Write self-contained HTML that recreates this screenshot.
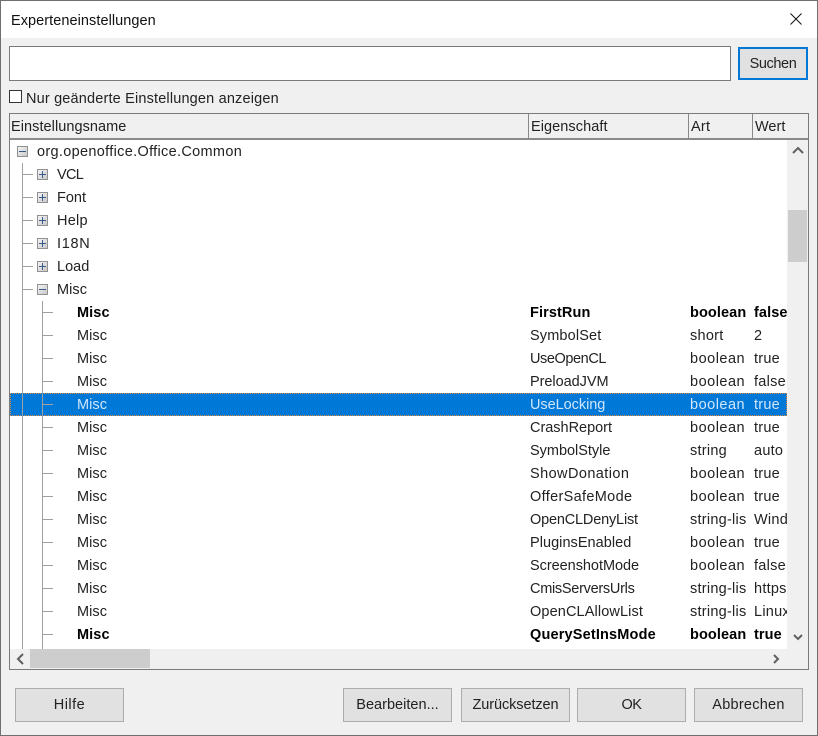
<!DOCTYPE html>
<html><head><meta charset="utf-8"><style>
html,body{margin:0;padding:0}
body{width:818px;height:736px;overflow:hidden;position:relative;background:#f0f0f0;font:14.5px/23px "Liberation Sans",sans-serif;color:#222}
div{position:absolute;box-sizing:border-box}
.t{white-space:nowrap;letter-spacing:.25px;margin-top:1px}
.m{letter-spacing:.05px}
.bo{letter-spacing:.5px}
.b{font-weight:bold;color:#000;letter-spacing:.1px}
.w{color:#cfe6fb}
.btn{height:34px;top:688px;width:109px;background:#e1e1e1;border:1px solid #adadad;text-align:center;line-height:33px;letter-spacing:.25px}
.v{background:#a0a0a0;width:1px}
.h{background:#a0a0a0;height:1px}
.box{width:11px;height:11px;background:linear-gradient(135deg,#f4f4f4,#c8c8c8);border:1px solid #919191}
.box:before{content:"";position:absolute;left:1px;top:4px;width:7px;height:1px;background:#3a5a8c}
.p:after{content:"";position:absolute;left:4px;top:1px;width:1px;height:7px;background:#3a5a8c}
.c{overflow:hidden;height:23px}
</style></head><body>
<div style="left:0;top:0;width:818px;height:38px;background:#fff"></div>
<div style="left:0;top:0;width:818px;height:736px;border:1px solid #6f6f6f;z-index:9;pointer-events:none"></div>
<div class="t" style="left:11px;top:9px;color:#111;letter-spacing:.06px">Experteneinstellungen</div>
<svg style="position:absolute;left:790px;top:13px" width="12" height="12"><path d="M.5.5l11 11M11.5.5l-11 11" stroke="#111" fill="none"/></svg>

<div style="left:9px;top:46px;width:722px;height:35px;background:#fff;border:1px solid #7a7a7a"></div>
<div style="left:738px;top:47px;width:70px;height:33px;background:#e1e1e1;border:2px solid #0078d7;text-align:center;line-height:30px;letter-spacing:-.4px">Suchen</div>
<div style="left:9px;top:90px;width:13px;height:13px;background:#fff;border:1px solid #333"></div>
<div class="t" style="left:26px;top:87px;letter-spacing:.17px">Nur geänderte Einstellungen anzeigen</div>

<div style="left:9px;top:113px;width:800px;height:557px;border:1px solid #7a7a7a;background:#f0f0f0"></div>
<div style="left:10px;top:138px;width:798px;height:2px;background:#8a8a8a"></div>
<div class="v" style="left:528px;top:114px;height:24px;background:#888"></div>
<div class="v" style="left:688px;top:114px;height:24px;background:#888"></div>
<div class="v" style="left:752px;top:114px;height:24px;background:#888"></div>
<div class="t" style="left:11px;top:115px;letter-spacing:.06px">Einstellungsname</div>
<div class="t" style="left:531px;top:115px;letter-spacing:.07px">Eigenschaft</div>
<div class="t" style="left:691px;top:115px">Art</div>
<div class="t" style="left:755px;top:115px;letter-spacing:0">Wert</div>

<div style="left:10px;top:140px;width:777px;height:509px;background:#fff"></div>
<div style="left:10px;top:393px;width:777px;height:23px;background:#0078d7;outline:1px dotted #e08a3c;outline-offset:-1px"></div>

<div class="v" style="left:22px;top:163px;height:486px"></div>
<div class="v" style="left:42px;top:301px;height:348px"></div>
<div class="h" style="left:22px;top:174px;width:11px"></div>
<div class="h" style="left:22px;top:197px;width:11px"></div>
<div class="h" style="left:22px;top:220px;width:11px"></div>
<div class="h" style="left:22px;top:243px;width:11px"></div>
<div class="h" style="left:22px;top:266px;width:11px"></div>
<div class="h" style="left:22px;top:289px;width:11px"></div>
<div class="h" style="left:43px;top:312px;width:10px"></div>
<div class="h" style="left:43px;top:335px;width:10px"></div>
<div class="h" style="left:43px;top:358px;width:10px"></div>
<div class="h" style="left:43px;top:381px;width:10px"></div>
<div class="h" style="left:43px;top:404px;width:10px"></div>
<div class="h" style="left:43px;top:427px;width:10px"></div>
<div class="h" style="left:43px;top:450px;width:10px"></div>
<div class="h" style="left:43px;top:473px;width:10px"></div>
<div class="h" style="left:43px;top:496px;width:10px"></div>
<div class="h" style="left:43px;top:519px;width:10px"></div>
<div class="h" style="left:43px;top:542px;width:10px"></div>
<div class="h" style="left:43px;top:565px;width:10px"></div>
<div class="h" style="left:43px;top:588px;width:10px"></div>
<div class="h" style="left:43px;top:611px;width:10px"></div>
<div class="h" style="left:43px;top:634px;width:10px"></div>

<div class="box" style="left:17px;top:146px"></div>
<div class="box p" style="left:37px;top:169px"></div>
<div class="box p" style="left:37px;top:192px"></div>
<div class="box p" style="left:37px;top:215px"></div>
<div class="box p" style="left:37px;top:238px"></div>
<div class="box p" style="left:37px;top:261px"></div>
<div class="box" style="left:37px;top:284px"></div>

<div class="t" style="left:37px;top:140px;letter-spacing:.32px">org.openoffice.Office.Common</div>
<div class="t" style="left:57px;top:163px;letter-spacing:-.7px">VCL</div>
<div class="t" style="left:57px;top:186px;letter-spacing:0">Font</div>
<div class="t" style="left:57px;top:209px">Help</div>
<div class="t" style="left:57px;top:232px;letter-spacing:.7px">I18N</div>
<div class="t" style="left:57px;top:255px;letter-spacing:0">Load</div>
<div class="t m" style="left:57px;top:278px">Misc</div>

<div class="t b" style="left:77px;top:301px">Misc</div><div class="t b" style="left:530px;top:301px">FirstRun</div><div class="t b" style="left:690px;top:301px">boolean</div><div class="t b c" style="left:754px;top:301px;width:33px">false</div>
<div class="t m" style="left:77px;top:324px">Misc</div><div class="t" style="left:530px;top:324px;letter-spacing:.14px">SymbolSet</div><div class="t" style="left:690px;top:324px">short</div><div class="t c" style="left:754px;top:324px;width:33px">2</div>
<div class="t m" style="left:77px;top:347px">Misc</div><div class="t" style="left:530px;top:347px;letter-spacing:-.42px">UseOpenCL</div><div class="t bo" style="left:690px;top:347px">boolean</div><div class="t c" style="left:754px;top:347px;width:33px">true</div>
<div class="t m" style="left:77px;top:370px">Misc</div><div class="t" style="left:530px;top:370px;letter-spacing:-.05px">PreloadJVM</div><div class="t bo" style="left:690px;top:370px">boolean</div><div class="t c" style="left:754px;top:370px;width:33px">false</div>
<div class="t w m" style="left:77px;top:393px">Misc</div><div class="t w" style="left:530px;top:393px;letter-spacing:-.05px">UseLocking</div><div class="t w bo" style="left:690px;top:393px">boolean</div><div class="t w c" style="left:754px;top:393px;width:33px">true</div>
<div class="t m" style="left:77px;top:416px">Misc</div><div class="t" style="left:530px;top:416px;letter-spacing:-.02px">CrashReport</div><div class="t bo" style="left:690px;top:416px">boolean</div><div class="t c" style="left:754px;top:416px;width:33px">true</div>
<div class="t m" style="left:77px;top:439px">Misc</div><div class="t" style="left:530px;top:439px;letter-spacing:-.02px">SymbolStyle</div><div class="t" style="left:690px;top:439px">string</div><div class="t c" style="left:754px;top:439px;width:33px">auto</div>
<div class="t m" style="left:77px;top:462px">Misc</div><div class="t" style="left:530px;top:462px;letter-spacing:.42px">ShowDonation</div><div class="t bo" style="left:690px;top:462px">boolean</div><div class="t c" style="left:754px;top:462px;width:33px">true</div>
<div class="t m" style="left:77px;top:485px">Misc</div><div class="t" style="left:530px;top:485px;letter-spacing:.33px">OfferSafeMode</div><div class="t bo" style="left:690px;top:485px">boolean</div><div class="t c" style="left:754px;top:485px;width:33px">true</div>
<div class="t m" style="left:77px;top:508px">Misc</div><div class="t" style="left:530px;top:508px;letter-spacing:-.18px">OpenCLDenyList</div><div class="t c" style="left:690px;top:508px;width:56px">string-list</div><div class="t c" style="left:754px;top:508px;width:33px">Windows</div>
<div class="t m" style="left:77px;top:531px">Misc</div><div class="t" style="left:530px;top:531px;letter-spacing:.04px">PluginsEnabled</div><div class="t bo" style="left:690px;top:531px">boolean</div><div class="t c" style="left:754px;top:531px;width:33px">true</div>
<div class="t m" style="left:77px;top:554px">Misc</div><div class="t" style="left:530px;top:554px;letter-spacing:-.04px">ScreenshotMode</div><div class="t bo" style="left:690px;top:554px">boolean</div><div class="t c" style="left:754px;top:554px;width:33px">false</div>
<div class="t m" style="left:77px;top:577px">Misc</div><div class="t" style="left:530px;top:577px;letter-spacing:-.28px">CmisServersUrls</div><div class="t c" style="left:690px;top:577px;width:56px">string-list</div><div class="t c" style="left:754px;top:577px;width:33px">https</div>
<div class="t m" style="left:77px;top:600px">Misc</div><div class="t" style="left:530px;top:600px;letter-spacing:.12px">OpenCLAllowList</div><div class="t c" style="left:690px;top:600px;width:56px">string-list</div><div class="t c" style="left:754px;top:600px;width:33px">Linux</div>
<div class="t b" style="left:77px;top:623px">Misc</div><div class="t b" style="left:530px;top:623px;letter-spacing:.17px">QuerySetInsMode</div><div class="t b" style="left:690px;top:623px">boolean</div><div class="t b c" style="left:754px;top:623px;width:33px">true</div>

<div style="left:788px;top:210px;width:19px;height:52px;background:#cdcdcd"></div>
<div style="left:30px;top:649px;width:120px;height:19px;background:#cdcdcd"></div>
<svg style="position:absolute;left:0;top:0;pointer-events:none" width="818" height="736" fill="none" stroke="#606060" stroke-width="2"><path d="M793 153l5-5 5 5M794 635l4 4 4-4M23 654l-5 5 5 5M774 655l4 4-4 4"/></svg>

<div class="btn" style="left:15px;letter-spacing:.5px">Hilfe</div>
<div class="btn" style="left:343px;letter-spacing:.02px">Bearbeiten...</div>
<div class="btn" style="left:461px;letter-spacing:-.08px">Zurücksetzen</div>
<div class="btn" style="left:577px;letter-spacing:-.5px">OK</div>
<div class="btn" style="left:694px">Abbrechen</div>
</body></html>
